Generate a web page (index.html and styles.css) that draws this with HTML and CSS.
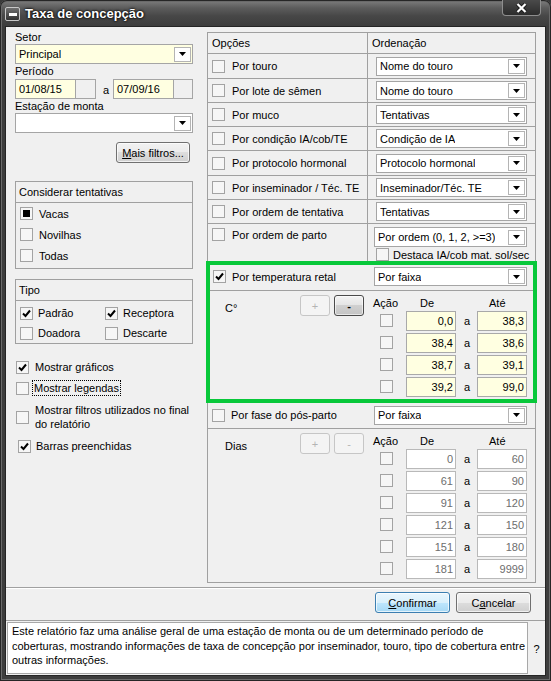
FILE: index.html
```html
<!DOCTYPE html>
<html lang="pt">
<head>
<meta charset="utf-8">
<title>Taxa de concepção</title>
<link rel="stylesheet" href="styles.css">
</head>
<body>
<div class="window">
  <div class="titlebar">
    <span class="sysicon"><span class="bar"></span></span>
    <span class="title">Taxa de concepção</span>
    <span class="close"><svg width="13" height="10" viewBox="0 0 13 10"><path d="M2.5 1 L10.5 9 M10.5 1 L2.5 9" fill="none" stroke="#1a1a1a" stroke-width="4"/><path d="M2.5 1 L10.5 9 M10.5 1 L2.5 9" fill="none" stroke="#fff" stroke-width="2.2"/></svg></span>
  </div>
  <div class="client">
    <div class="main">
      <div class="leftcol">
        <div class="lbl">Setor</div>
        <div class="select yellow"><span class="val">Principal</span><span class="arrow"><svg width="7" height="4" viewBox="0 0 7 4"><path d="M0 0H7L3.5 4Z"/></svg></span></div>
        <div class="lbl">Período</div>
        <div class="daterow">
          <div class="date">01/08/15</div><div class="datebtn"></div>
          <span class="ato">a</span>
          <div class="date">07/09/16</div><div class="datebtn"></div>
        </div>
        <div class="lbl">Estação de monta</div>
        <div class="select"><span class="val"></span><span class="arrow"><svg width="7" height="4" viewBox="0 0 7 4"><path d="M0 0H7L3.5 4Z"/></svg></span></div>
        <div class="morerow"><span class="btn btn-more"><u>M</u>ais filtros...</span></div>

        <div class="group g-tent">
          <div class="ghead">Considerar tentativas</div>
          <div class="gbody">
            <div class="chkrow"><span class="cb"><span class="sq"></span></span><span class="ctxt">Vacas</span></div>
            <div class="chkrow"><span class="cb"></span><span class="ctxt">Novilhas</span></div>
            <div class="chkrow"><span class="cb"></span><span class="ctxt">Todas</span></div>
          </div>
        </div>

        <div class="group g-tipo">
          <div class="ghead">Tipo</div>
          <div class="tipogrid">
            <div class="chkrow r20"><span class="cb"><svg class="ck" viewBox="0 0 11 11"><path d="M2 5.5 L4.5 8 L9 2.5" fill="none" stroke="#000" stroke-width="2"/></svg></span><span class="ctxt t2">Padrão</span></div>
            <div class="chkrow r20 p0"><span class="cb"><svg class="ck" viewBox="0 0 11 11"><path d="M2 5.5 L4.5 8 L9 2.5" fill="none" stroke="#000" stroke-width="2"/></svg></span><span class="ctxt t2">Receptora</span></div>
            <div class="chkrow r20"><span class="cb"></span><span class="ctxt t2">Doadora</span></div>
            <div class="chkrow r20 p0"><span class="cb"></span><span class="ctxt t2">Descarte</span></div>
          </div>
        </div>

        <div class="opt o-graf"><span class="cb"><svg class="ck" viewBox="0 0 11 11"><path d="M2 5.5 L4.5 8 L9 2.5" fill="none" stroke="#000" stroke-width="2"/></svg></span><span class="otxt">Mostrar gráficos</span></div>
        <div class="opt o-leg"><span class="cb"></span><span class="otxt focus">Mostrar legendas</span></div>
        <div class="opt o-filt"><span class="cb"></span><span class="otxt two">Mostrar filtros utilizados no final<br>do relatório</span></div>
        <div class="opt o-barr"><span class="cb"><svg class="ck" viewBox="0 0 11 11"><path d="M2 5.5 L4.5 8 L9 2.5" fill="none" stroke="#000" stroke-width="2"/></svg></span><span class="otxt">Barras preenchidas</span></div>
      </div>

      <div class="panel">
        <div class="prow phead"><div class="pc1">Opções</div><div class="pc2">Ordenação</div></div>
        <div class="prow h25"><div class="pc1"><span class="cb"></span><span class="ptxt">Por touro</span></div><div class="pc2"><div class="select psel"><span class="val">Nome do touro</span><span class="arrow"><svg width="7" height="4" viewBox="0 0 7 4"><path d="M0 0H7L3.5 4Z"/></svg></span></div></div></div>
        <div class="prow"><div class="pc1"><span class="cb"></span><span class="ptxt">Por lote de sêmen</span></div><div class="pc2"><div class="select psel"><span class="val">Nome do touro</span><span class="arrow"><svg width="7" height="4" viewBox="0 0 7 4"><path d="M0 0H7L3.5 4Z"/></svg></span></div></div></div>
        <div class="prow"><div class="pc1"><span class="cb"></span><span class="ptxt">Por muco</span></div><div class="pc2"><div class="select psel"><span class="val">Tentativas</span><span class="arrow"><svg width="7" height="4" viewBox="0 0 7 4"><path d="M0 0H7L3.5 4Z"/></svg></span></div></div></div>
        <div class="prow"><div class="pc1"><span class="cb"></span><span class="ptxt">Por condição IA/cob/TE</span></div><div class="pc2"><div class="select psel"><span class="val">Condição de IA</span><span class="arrow"><svg width="7" height="4" viewBox="0 0 7 4"><path d="M0 0H7L3.5 4Z"/></svg></span></div></div></div>
        <div class="prow h25"><div class="pc1"><span class="cb"></span><span class="ptxt">Por protocolo hormonal</span></div><div class="pc2"><div class="select psel"><span class="val">Protocolo hormonal</span><span class="arrow"><svg width="7" height="4" viewBox="0 0 7 4"><path d="M0 0H7L3.5 4Z"/></svg></span></div></div></div>
        <div class="prow"><div class="pc1"><span class="cb"></span><span class="ptxt">Por inseminador / Téc. TE</span></div><div class="pc2"><div class="select psel"><span class="val">Inseminador/Téc. TE</span><span class="arrow"><svg width="7" height="4" viewBox="0 0 7 4"><path d="M0 0H7L3.5 4Z"/></svg></span></div></div></div>
        <div class="prow"><div class="pc1"><span class="cb"></span><span class="ptxt">Por ordem de tentativa</span></div><div class="pc2"><div class="select psel"><span class="val">Tentativas</span><span class="arrow"><svg width="7" height="4" viewBox="0 0 7 4"><path d="M0 0H7L3.5 4Z"/></svg></span></div></div></div>
        <div class="prow prow-parto">
          <div class="pc1 top"><span class="cb"></span><span class="ptxt">Por ordem de parto</span></div>
          <div class="pc2 stack">
            <div class="select psel wide"><span class="val">Por ordem (0, 1, 2, &gt;=3)</span><span class="arrow"><svg width="7" height="4" viewBox="0 0 7 4"><path d="M0 0H7L3.5 4Z"/></svg></span></div>
            <div class="destaca"><span class="cb"></span><span class="dtxt">Destaca IA/cob mat. sol/sec</span></div>
          </div>
        </div>

        <div class="green">
          <div class="srow">
            <div class="scell"><span class="cb"><svg class="ck" viewBox="0 0 11 11"><path d="M2 5.5 L4.5 8 L9 2.5" fill="none" stroke="#000" stroke-width="2"/></svg></span><span class="ptxt">Por temperatura retal</span></div>
            <div class="select psel wide"><span class="val">Por faixa</span><span class="arrow"><svg width="7" height="4" viewBox="0 0 7 4"><path d="M0 0H7L3.5 4Z"/></svg></span></div>
          </div>
          <div class="range">
            <div class="rleft">
              <span class="rlabel">C°</span>
              <span class="pm dis">+</span>
              <span class="pm act">-</span>
            </div>
            <div class="rtable">
              <span class="rh">Ação</span><span class="rh de">De</span><span></span><span class="rh ate">Até</span>
              <span class="cbc"><span class="cb"></span></span><span class="rin">0,0</span><span class="ra">a</span><span class="rin">38,3</span>
              <span class="cbc"><span class="cb"></span></span><span class="rin">38,4</span><span class="ra">a</span><span class="rin">38,6</span>
              <span class="cbc"><span class="cb"></span></span><span class="rin">38,7</span><span class="ra">a</span><span class="rin">39,1</span>
              <span class="cbc"><span class="cb"></span></span><span class="rin">39,2</span><span class="ra">a</span><span class="rin">99,0</span>
            </div>
          </div>
        </div>

        <div class="srow fase">
          <div class="scell"><span class="cb"></span><span class="ptxt">Por fase do pós-parto</span></div>
          <div class="select psel wide"><span class="val">Por faixa</span><span class="arrow"><svg width="7" height="4" viewBox="0 0 7 4"><path d="M0 0H7L3.5 4Z"/></svg></span></div>
        </div>
        <div class="range fase">
          <div class="rleft">
            <span class="rlabel">Dias</span>
            <span class="pm dis">+</span>
            <span class="pm dis">-</span>
          </div>
          <div class="rtable">
            <span class="rh">Ação</span><span class="rh de">De</span><span></span><span class="rh ate">Até</span>
            <span class="cbc"><span class="cb"></span></span><span class="rin off">0</span><span class="ra">a</span><span class="rin off">60</span>
            <span class="cbc"><span class="cb"></span></span><span class="rin off">61</span><span class="ra">a</span><span class="rin off">90</span>
            <span class="cbc"><span class="cb"></span></span><span class="rin off">91</span><span class="ra">a</span><span class="rin off">120</span>
            <span class="cbc"><span class="cb"></span></span><span class="rin off">121</span><span class="ra">a</span><span class="rin off">150</span>
            <span class="cbc"><span class="cb"></span></span><span class="rin off">151</span><span class="ra">a</span><span class="rin off">180</span>
            <span class="cbc"><span class="cb"></span></span><span class="rin off">181</span><span class="ra">a</span><span class="rin off">9999</span>
          </div>
        </div>
      </div>
    </div>

    <div class="sep"></div>
    <div class="btnbar">
      <span class="btn btn-def"><u>C</u>onfirmar</span>
      <span class="btn">C<u>a</u>ncelar</span>
    </div>
    <div class="desc">
      <div class="dtext">Este relatório faz uma análise geral de uma estação de monta ou de um determinado período de<br>coberturas, mostrando informações de taxa de concepção por inseminador, touro, tipo de cobertura entre<br>outras informações.</div>
      <div class="help">?</div>
    </div>
  </div>
</div>
</body>
</html>
```

FILE: styles.css
```css
* { box-sizing: border-box; }
html, body { margin: 0; padding: 0; }
body {
  width: 551px; height: 681px; overflow: hidden;
  background: #3a3a3a;
  font-family: "Liberation Sans", Arial, sans-serif;
  font-size: 11px; color: #000;
}
.window {
  width: 551px; height: 681px;
  display: flex; flex-direction: column;
  background: linear-gradient(#808080 0, #5c5c5c 8px, #474747 16px, #3c3c3c 27px, #3d3d3d 100%);
  border-radius: 7px 7px 0 0;
  box-shadow: inset 0 0 0 1px #262626, inset 0 0 0 2px #6a6a6a;
}
.titlebar { height: 27px; display: flex; align-items: flex-start; padding-left: 5px; flex: none; }
.sysicon {
  margin-top: 7px; width: 15px; height: 14px;
  border: 1px solid #c8c8c8; border-radius: 2px;
  background: linear-gradient(#707070, #333);
  display: flex; align-items: center; justify-content: center;
}
.sysicon .bar { width: 8px; height: 3px; background: #fff; }
.title {
  margin-left: 5px; margin-top: 5px;
  color: #fff; font-weight: bold; font-size: 13px; line-height: 17px;
  text-shadow: 0 0 2px #000, 0 0 3px #000;
}
.close {
  margin-left: auto; margin-right: 10px;
  width: 39px; height: 16px;
  border: 1px solid #8e8e8e; border-top: none;
  border-radius: 0 0 4px 4px;
  background: linear-gradient(#4a4a4a, #2c2c2c);
  display: flex; align-items: center; justify-content: center;
}
.client {
  margin: 0 6px 6px 6px; flex: 1;
  background: #f0f0f0;
  display: flex; flex-direction: column;
  box-shadow: 0 0 0 1px #252525;
}
.main { height: 560px; display: flex; align-items: flex-start; flex: none; }

/* left column */
.leftcol { width: 178px; margin-left: 9px; padding-top: 3px; display: flex; flex-direction: column; }
.lbl { height: 14px; line-height: 14px; white-space: nowrap; }
.select {
  height: 20px; border: 1px solid #a5a5a5; background: #fff;
  display: flex; align-items: center; justify-content: space-between;
  padding: 0 1px 0 3px; flex: none;
}
.select.yellow { background: #ffffe1; }
.val { white-space: nowrap; overflow: hidden; line-height: 14px; }
.arrow {
  width: 17px; height: 15px; flex: none;
  border: 1px solid #b4b4b4; background: #fff;
  display: flex; align-items: center; justify-content: center;
}
.daterow { margin-top: 1px; height: 20px; display: flex; align-items: center; }
.date {
  width: 61px; height: 20px; border: 1px solid #a5a5a5; background: #ffffe1;
  padding-left: 3px; line-height: 18px;
}
.datebtn { width: 20px; height: 20px; border: 1px solid #a5a5a5; border-left: none; background: #f0f0f0; }
.daterow .datebtn:last-child { width: 19px; }
.ato { width: 17px; padding-left: 7px; line-height: 20px; padding-top: 2px; }
.morerow { margin-top: 9px; display: flex; justify-content: flex-end; padding-right: 3px; }
.btn {
  height: 21px; width: 75px;
  border: 1px solid #707070; border-radius: 3px;
  background: linear-gradient(#f2f2f2 0, #ebebeb 50%, #dddddd 50%, #cfcfcf 100%);
  display: flex; align-items: center; justify-content: center;
  box-shadow: inset 0 0 0 1px rgba(255,255,255,.7);
  white-space: nowrap;
}
.btn-more { width: 74px; }
.btn-def {
  border-color: #3c7fb1;
  background: linear-gradient(#eaf6fd 0, #d9f0fc 50%, #bee6fd 50%, #a7d9f5 100%);
}
.btn u { text-decoration: underline; }

.group { border: 1px solid #a0a0a0; }
.g-tent { margin-top: 18px; }
.g-tipo { margin-top: 10px; }
.ghead { height: 21px; border-bottom: 1px solid #a0a0a0; padding: 3px 0 0 3px; line-height: 14px; }
.gbody { padding-bottom: 2px; }
.chkrow { height: 21px; display: flex; align-items: center; padding-left: 4px; }
.chkrow.r20 { height: 20px; }
.chkrow.p0 { padding-left: 0; }
.ctxt { margin-left: 6px; line-height: 14px; white-space: nowrap; }
.ctxt.t2 { margin-left: 5px; }
.tipogrid { display: grid; grid-template-columns: 89px 1fr; padding-top: 2px; }

.cb {
  width: 13px; height: 13px; flex: none;
  border: 1px solid #a3a3a3; background: #f6f6f6;
  display: flex; align-items: center; justify-content: center;
}
.cb .ck { width: 11px; height: 11px; display: block; }
.cb .sq { width: 7px; height: 7px; background: #000; }

.opt { display: flex; align-items: center; height: 20px; padding-left: 1px; }
.otxt { margin-left: 6px; line-height: 14px; white-space: nowrap; }
.o-graf { margin-top: 13px; }
.o-leg { margin-top: 1px; }
.o-leg .otxt { margin-left: 3px; border: 1px dotted #000; padding: 0 1px; }
.o-filt { margin-top: 5px; height: 28px; }
.o-filt .otxt { line-height: 14px; }
.o-barr { margin-top: 5px; padding-left: 3px; }
.o-barr .otxt { margin-left: 5px; }

/* right panel */
.panel {
  margin-left: 14px; margin-top: 5px;
  width: 329px; height: 551px;
  border: 1px solid #a0a0a0;
  display: flex; flex-direction: column;
}
.prow { display: flex; height: 24px; border-bottom: 1px solid #a0a0a0; flex: none; }
.prow.h25 { height: 25px; }
.prow.phead { height: 21px; }
.pc1 {
  width: 160px; border-right: 1px solid #a0a0a0;
  display: flex; align-items: center; padding-left: 4px;
  line-height: 14px; white-space: nowrap;
}
.pc2 { flex: 1; display: flex; align-items: center; padding-left: 8px; line-height: 14px; }
.phead .pc2 { padding-left: 4px; }
.ptxt { margin-left: 7px; line-height: 14px; white-space: nowrap; }
.psel { width: 151px; height: 19px; }
.psel.wide { width: 153px; }
.prow-parto { height: 37px; border-bottom: none; }
.pc1.top { align-items: flex-start; padding-top: 4px; }
.pc2.stack { flex-direction: column; align-items: flex-start; padding-left: 6px; padding-top: 3px; }
.prow-parto .psel { height: 20px; }
.destaca { margin-top: 1px; padding-left: 2px; display: flex; align-items: flex-start; }
.dtxt { margin-left: 4px; line-height: 14px; white-space: nowrap; }

.green { margin: 0 -2px; border: 4px solid #08c83a; flex: none; }
.srow {
  height: 26px; display: flex; align-items: center;
  border-bottom: 1px solid #a0a0a0; padding-bottom: 2px; flex: none;
}
.srow .scell { width: 164px; display: flex; align-items: center; padding-left: 3px; }
.srow .ptxt { margin-left: 6px; }
.srow.fase { height: 26px; padding-bottom: 1px; }
.srow.fase .scell { width: 166px; padding-left: 4px; }

.range { height: 108px; display: flex; padding-top: 4px; flex: none; }
.range.fase { height: 152px; }
.rleft { width: 163px; display: flex; align-items: flex-start; padding-left: 15px; }
.range.fase .rleft { width: 165px; padding-left: 17px; }
.rlabel { width: 75px; line-height: 14px; margin-top: 6px; }
.pm {
  width: 30px; height: 21px; border-radius: 3px;
  display: flex; align-items: center; justify-content: center;
  font-size: 11px;
}
.pm + .pm { margin-left: 4px; }
.pm.dis { border: 1px solid #c6c6c6; background: #f4f4f4; color: #b4b4b4; }
.pm.act {
  border: 1px solid #4a4a4a; color: #000; font-weight: bold;
  background: linear-gradient(#f3f3f3 0, #e4e4e4 50%, #d0d0d0 50%, #c4c4c4 100%);
  box-shadow: inset 0 0 0 1px rgba(255,255,255,.6);
}
.rtable {
  display: grid;
  grid-template-columns: 33px 50px 21px 50px;
  grid-auto-rows: 22px;
  grid-template-rows: 15px;
  padding-top: 1px;
  align-items: start;
}
.rh { line-height: 14px; white-space: nowrap; }
.rh.de { padding-left: 14px; }
.rh.ate { padding-left: 12px; }
.cbc { padding-left: 7px; padding-top: 3px; }
.rin {
  height: 20px; border: 1px solid #a9a9a9; background: #ffffe1;
  text-align: right; padding-right: 2px; line-height: 18px;
}
.rin.off { background: #fff; border-color: #b9b9b9; color: #6d6d6d; }
.ra { text-align: center; line-height: 20px; padding-left: 1px; }

/* bottom */
.sep { height: 2px; border-top: 1px solid #a0a0a0; border-bottom: 1px solid #fff; flex: none; }
.btnbar {
  height: 31px; display: flex; justify-content: flex-end; align-items: flex-start;
  padding-top: 3px; padding-right: 14px; gap: 6px; flex: none;
}
.desc { flex: 1; display: flex; border-top: 1px solid #a0a0a0; padding: 1px 0 1px 1px; }
.dtext {
  flex: 1; background: #fff; border: 1px solid #a8a8a8;
  padding: 1px 0 0 4px; line-height: 14.5px; white-space: nowrap; overflow: hidden;
}
.help { width: 17px; display: flex; align-items: center; justify-content: center; padding-top: 2px; }
```
